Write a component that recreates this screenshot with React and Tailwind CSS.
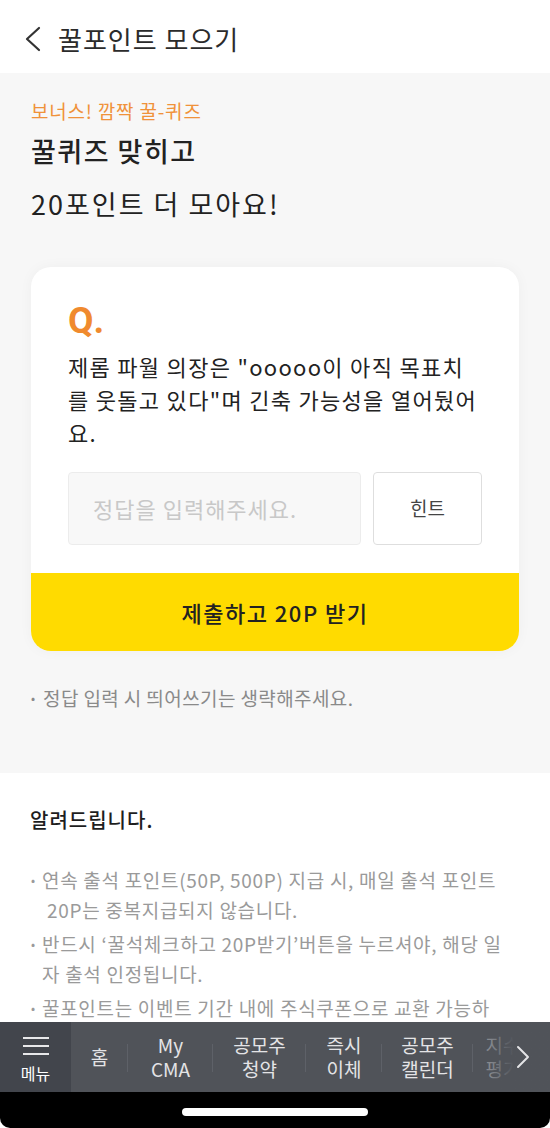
import React from "react";

function NavItem({ w, lines, sep = true, faded = false }) {
  return (
    <div className={`relative flex h-full shrink-0 items-center justify-center ${w}`}>
      <div className={`flex flex-col items-center text-[19px] leading-[24px] ${faded ? "text-[#85888e]" : "text-[#e4e4e6]"}`}>
        {lines.map((l, i) => (
          <span key={i} className="block whitespace-nowrap">{l}</span>
        ))}
      </div>
      {sep && <div className="absolute right-0 top-[22px] h-[28px] w-px bg-[#5e6168]" />}
    </div>
  );
}

function Bullet({ children }) {
  return (
    <div className="flex">
      <span className="w-[12px] shrink-0 pl-[1px] text-[12px]">•</span>
      <div>{children}</div>
    </div>
  );
}

export default function App() {
  return (
    <div className="flex h-[1128px] w-[550px] flex-col overflow-hidden bg-white font-['Noto_Sans_CJK_KR','Noto_Sans',sans-serif] text-[#222]">
      {/* Header */}
      <div className="flex h-[73px] shrink-0 items-center bg-white pl-[24px] pt-[4px]">
        <svg width="18" height="26" viewBox="0 0 18 26" className="shrink-0">
          <polyline points="15,2 3,13 15,24" fill="none" stroke="#333" strokeWidth="2.2" strokeLinecap="round" strokeLinejoin="round" />
        </svg>
        <div className="ml-[16px] text-[26px] leading-[36px] tracking-[1px] text-[#2b2b2b]">꿀포인트 모으기</div>
      </div>

      {/* Content */}
      <div className="flex-1 overflow-hidden">
        <div className="h-[700px] bg-[#f7f7f7] px-[31px] pt-[26px]">
          <div className="text-[19px] leading-[24px] tracking-[0.8px] text-[#f0923a]">보너스! 깜짝 꿀-퀴즈</div>
          <div className="mt-[10px] text-[27px] font-medium leading-[36px] tracking-[1.5px] text-[#222]">꿀퀴즈 맞히고</div>
          <div className="mt-[17px] text-[27px] leading-[36px] tracking-[2px] text-[#222]">20포인트 더 모아요!</div>

          <div className="mt-[45px] overflow-hidden rounded-[20px] bg-white shadow-[0_0_14px_rgba(0,0,0,0.04)]">
            <div className="px-[37px] pt-[34px]">
              <div className="font-['Roboto',sans-serif] text-[37px] font-bold leading-[40px] text-[#f08a2e]">Q.</div>
              <div className="mt-[9px] text-[22px] leading-[33px] tracking-[1.3px] text-[#222]">
                <div className="whitespace-nowrap">제롬 파월 의장은 "ooooo이 아직 목표치</div>
                <div className="whitespace-nowrap">를 웃돌고 있다"며 긴축 가능성을 열어뒀어</div>
                <div className="whitespace-nowrap">요.</div>
              </div>
              <div className="mt-[23px] flex gap-[12px]">
                <div className="flex h-[73px] w-[293px] items-center rounded-[4px] border border-[#ececec] bg-[#f8f8f8] pl-[24px]">
                  <span className="whitespace-nowrap text-[22px] tracking-[1px] text-[#c8c8c8]">정답을 입력해주세요.</span>
                </div>
                <div className="flex h-[73px] w-[109px] items-center justify-center rounded-[4px] border border-[#dedede] bg-white">
                  <span className="text-[19px] text-[#444]">힌트</span>
                </div>
              </div>
            </div>
            <div className="mt-[28px] flex h-[78px] items-center justify-center bg-[#ffdb00]">
              <span className="text-[22px] font-medium tracking-[1.5px] text-[#222]">제출하고 20P 받기</span>
            </div>
          </div>

          <div className="mt-[34px] flex text-[19px] leading-[26px] tracking-[0.4px] text-[#8a8a8a]">
            <span className="w-[12px] shrink-0 text-[12px]">•</span>
            <span className="whitespace-nowrap">정답 입력 시 띄어쓰기는 생략해주세요.</span>
          </div>
        </div>

        <div className="bg-white px-[30px] pt-[33px]">
          <div className="text-[20px] font-medium leading-[28px] tracking-[1px] text-[#1e1e1e]">알려드립니다.</div>
          <div className="mt-[31px] flex flex-col gap-[4px] text-[19px] leading-[30px] tracking-[0.7px] text-[#9a9a9a]">
            <Bullet>
              <div className="whitespace-nowrap">연속 출석 포인트(50P, 500P) 지급 시, 매일 출석 포인트</div>
              <div className="whitespace-nowrap pl-[5px]">20P는 중복지급되지 않습니다.</div>
            </Bullet>
            <Bullet>
              <div className="whitespace-nowrap">반드시 ‘꿀석체크하고 20P받기’버튼을 누르셔야, 해당 일</div>
              <div className="whitespace-nowrap">자 출석 인정됩니다.</div>
            </Bullet>
            <Bullet>
              <div className="whitespace-nowrap">꿀포인트는 이벤트 기간 내에 주식쿠폰으로 교환 가능하</div>
              <div className="whitespace-nowrap">며, 기간 종료 후 소멸됩니다.</div>
            </Bullet>
          </div>
        </div>
      </div>

      {/* Bottom nav */}
      <div className="relative flex h-[70px] shrink-0 overflow-hidden bg-[#505359]">
        <div className="flex h-full w-[71px] shrink-0 flex-col items-center bg-[#42454c] pt-[15px]">
          <div className="flex w-[26px] flex-col gap-[6px]">
            <div className="h-[2px] bg-[#e8e8ea]" />
            <div className="h-[2px] bg-[#e8e8ea]" />
            <div className="h-[2px] bg-[#e8e8ea]" />
          </div>
          <div className="mt-[8px] text-[16px] leading-[20px] text-white">메뉴</div>
        </div>
        <NavItem w="w-[57px]" lines={["홈"]} />
        <NavItem w="w-[85px]" lines={["My", "CMA"]} />
        <NavItem w="w-[93px]" lines={["공모주", "청약"]} />
        <NavItem w="w-[76px]" lines={["즉시", "이체"]} />
        <NavItem w="w-[91px]" lines={["공모주", "캘린더"]} />
        <NavItem w="w-[60px]" lines={["지수", "평가"]} sep={false} faded />
        <div className="absolute right-0 top-0 flex h-full w-[60px] items-center justify-end bg-gradient-to-r from-transparent to-[#505359] to-40% pr-[20px]">
          <svg width="14" height="24" viewBox="0 0 14 24">
            <polyline points="2,2 12,12 2,22" fill="none" stroke="#e4e4e6" strokeWidth="2" strokeLinecap="round" strokeLinejoin="round" />
          </svg>
        </div>
      </div>

      {/* Home indicator */}
      <div className="flex h-[36px] shrink-0 items-start justify-center rounded-b-[10px] bg-black pt-[16px]">
        <div className="h-[8px] w-[186px] rounded-full bg-white" />
      </div>
    </div>
  );
}
